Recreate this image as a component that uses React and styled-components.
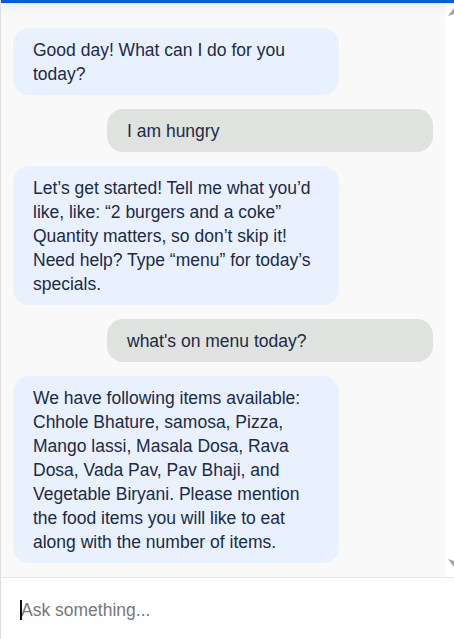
import React from "react";
import styled, { createGlobalStyle } from "styled-components";

const messages = [
	{ from: "bot", text: "Good day! What can I do for you today?" },
	{ from: "user", text: "I am hungry" },
	{
		from: "bot",
		text:
			"Let’s get started! Tell me what you’d like, like: “2 burgers and a coke” Quantity matters, so don’t skip it! Need help? Type “menu” for today’s specials."
	},
	{ from: "user", text: "what's on menu today?" },
	{
		from: "bot",
		text:
			"We have following items available: Chhole Bhature, samosa, Pizza, Mango lassi, Masala Dosa, Rava Dosa, Vada Pav, Pav Bhaji, and Vegetable Biryani. Please mention the food items you will like to eat along with the number of items."
	}
];

export default function App() {
	return (
		<>
			<GlobalStyle />
			<ChatWindow>
				<Accent />
				<TopBar />
				<Body>
					<MessageList>
						{messages.map((m, i) => (
							<Bubble key={i} user={m.from === "user"}>
								{m.text}
							</Bubble>
						))}
					</MessageList>
					<ScrollGutter>
						<Arrow viewBox="0 0 6 8">
							<path d="M6 0 L6 6 L0 8 Z" />
						</Arrow>
						<Arrow viewBox="0 0 6 8">
							<path d="M6 8 L6 2 L0 0 Z" />
						</Arrow>
					</ScrollGutter>
				</Body>
				<InputBar>
					<Caret />
					<Input placeholder="Ask something..." />
				</InputBar>
			</ChatWindow>
		</>
	);
}

// styled components -------------------------

const GlobalStyle = createGlobalStyle`
	html, body {
		margin: 0;
		padding: 0;
		background: #ffffff;
	}
	body {
		font-family: "Liberation Sans", Arial, sans-serif;
	}
`;

const ChatWindow = styled.div`
	position: relative;
	display: flex;
	flex-direction: column;
	width: 454px;
	height: 639px;
	box-sizing: border-box;
	border-left: 1px solid #dedede;
	overflow: hidden;
`;

const Accent = styled.div`
	position: absolute;
	left: -1px;
	top: 0;
	width: 1px;
	height: 161px;
	background: #e8a21c;
	z-index: 3;
`;

const TopBar = styled.div`
	height: 3px;
	flex: none;
	background: #0c5bd6;
	box-shadow: 0 3px 10px rgba(0, 0, 0, 0.12);
	position: relative;
	z-index: 2;
`;

const Body = styled.div`
	flex: 1;
	display: flex;
	min-height: 0;
`;

const MessageList = styled.div`
	flex: 1;
	display: flex;
	flex-direction: column;
	gap: 14px;
	padding: 25px 12px 0 12px;
	background: #f9f9f9;
`;

const Bubble = styled.div`
	box-sizing: border-box;
	width: 326px;
	padding: 10px 20px 9px;
	border-radius: 16px;
	font-size: 17.5px;
	line-height: 24px;
	color: #1a2b45;
	align-self: ${props => (props.user ? "flex-end" : "flex-start")};
	background: ${props => (props.user ? "#e0e2df" : "#eaf1fe")};
`;

const ScrollGutter = styled.div`
	width: 9px;
	flex: none;
	display: flex;
	flex-direction: column;
	justify-content: space-between;
	align-items: flex-end;
	padding: 5px 0 10px;
	background: #ffffff;
`;

const Arrow = styled.svg`
	width: 6px;
	height: 8px;
	fill: #a3a3a3;
`;

const InputBar = styled.div`
	position: relative;
	height: 62px;
	flex: none;
	display: flex;
	align-items: center;
	padding: 3px 0 0 19px;
	box-sizing: border-box;
	border-top: 1px solid #e6e6e6;
	background: #ffffff;
`;

const Caret = styled.span`
	position: absolute;
	left: 19px;
	top: 22px;
	width: 2px;
	height: 20px;
	background: #111111;
`;

const Input = styled.input`
	flex: 1;
	border: none;
	outline: none;
	background: transparent;
	padding: 0 0 0 1px;
	font-family: "Liberation Sans", Arial, sans-serif;
	font-size: 17.5px;
	color: #1a2b45;
	caret-color: transparent;

	&::placeholder {
		color: #777777;
	}
`;

// -------------------------------------------
